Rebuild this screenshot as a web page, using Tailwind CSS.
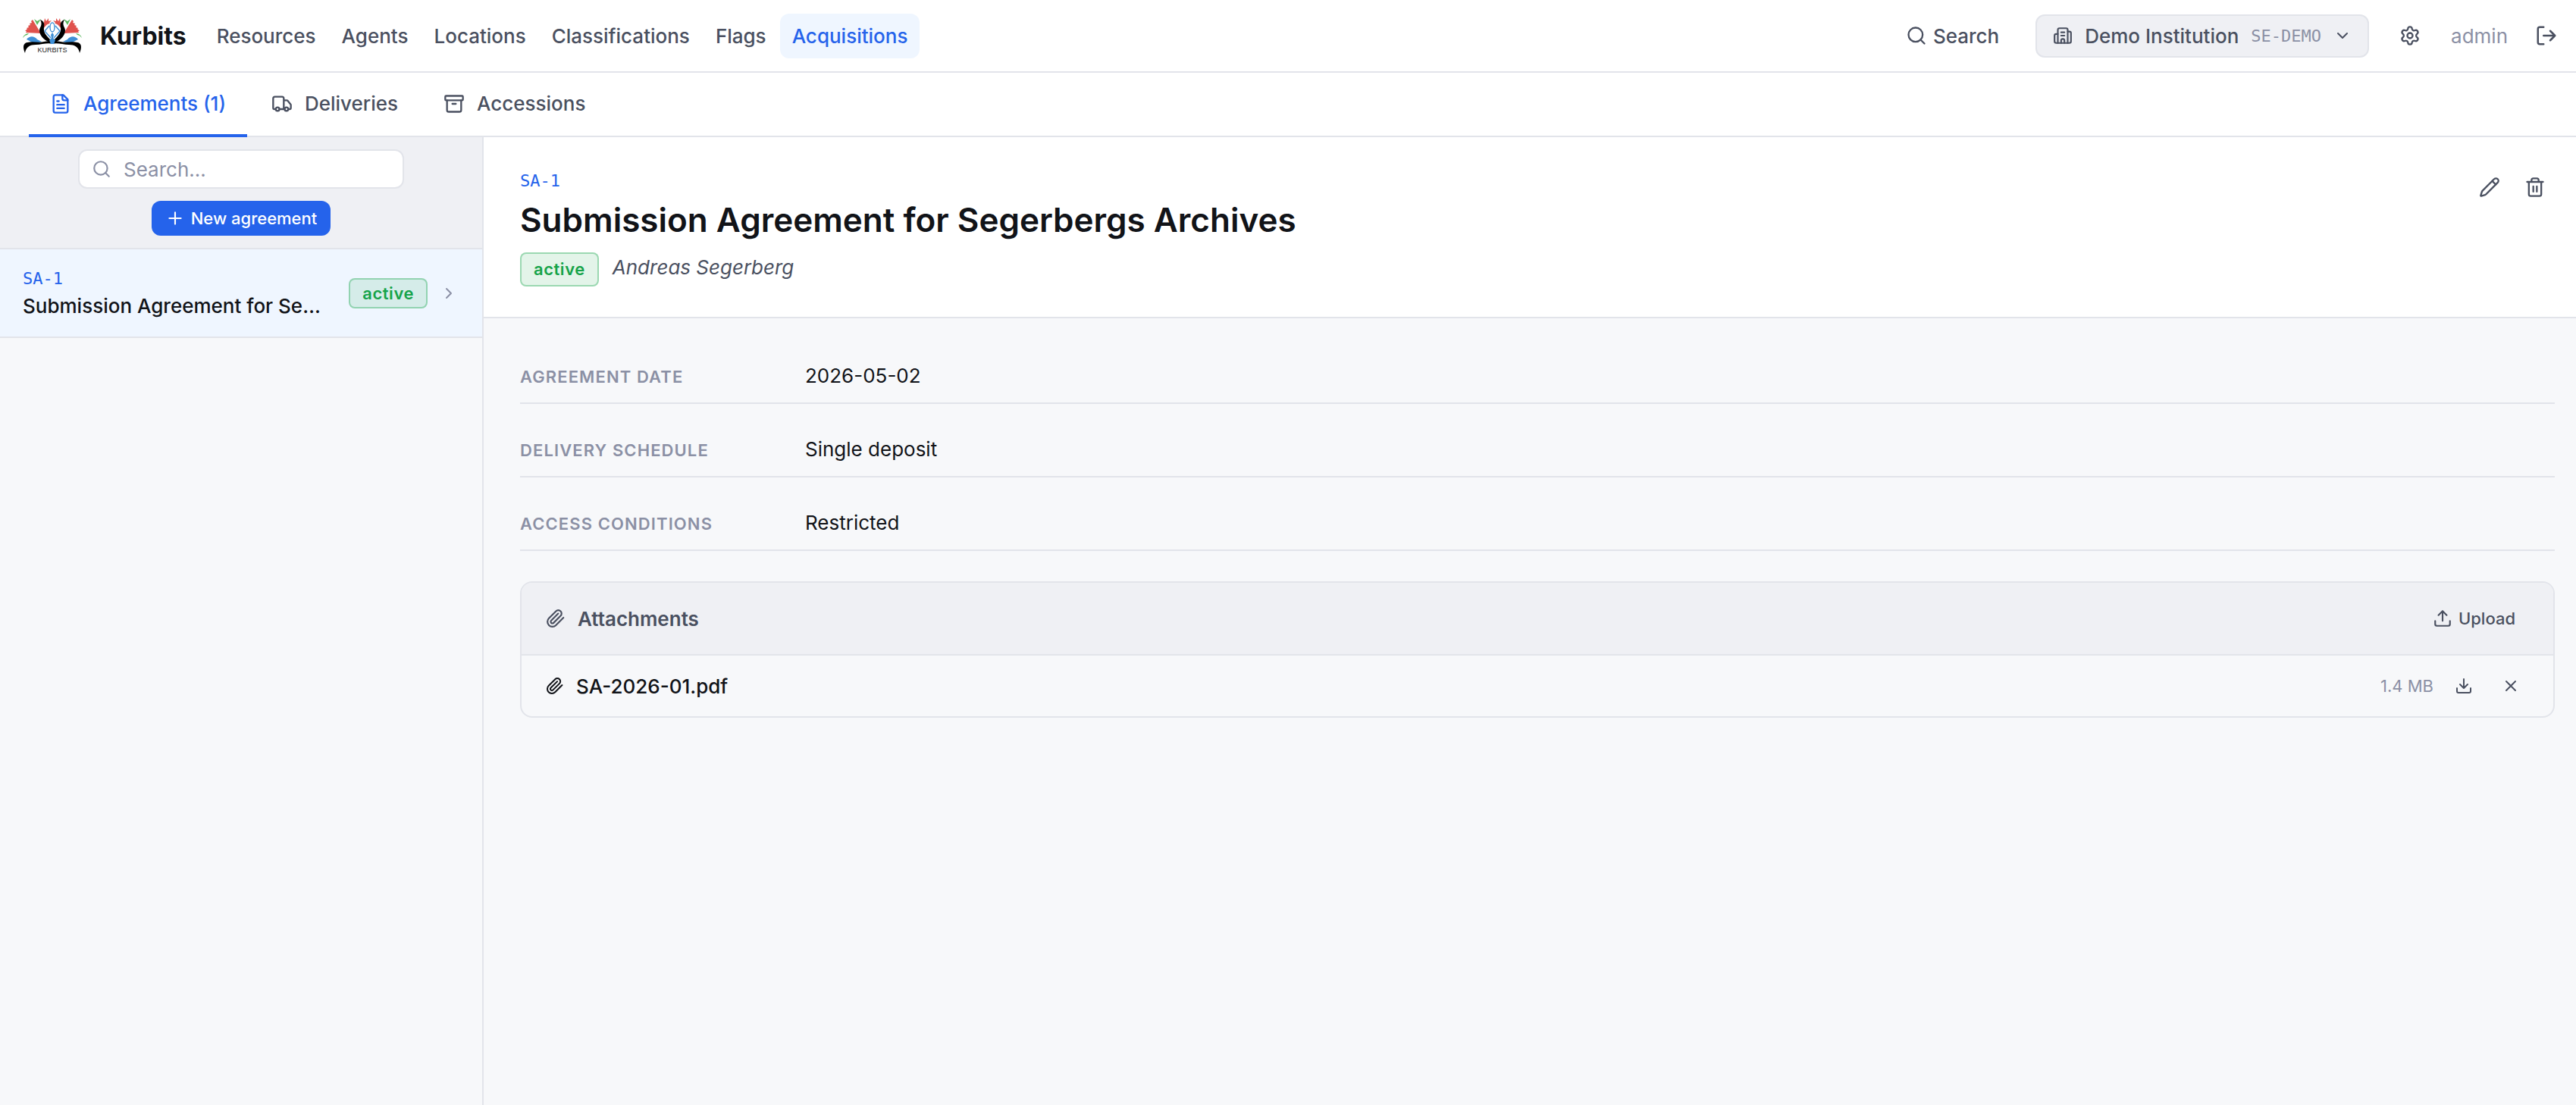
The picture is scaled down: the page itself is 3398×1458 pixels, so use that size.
<!DOCTYPE html>
<html lang="en">
<head>
  <meta charset="utf-8">
  <meta name="viewport" content="width=device-width, initial-scale=1">
  <title>Kurbits – Acquisitions</title>
  <script src="https://cdn.jsdelivr.net/npm/@tailwindcss/browser@4"></script>
</head>
<body class="min-h-screen flex flex-col bg-[#f7f8fa] text-[#111318] text-[26px] leading-[39px] font-[Inter,sans-serif]">

  <!-- icon sprite -->
  <svg class="hidden" aria-hidden="true">
    <symbol id="search" viewBox="0 0 24 24"><circle cx="11" cy="11" r="8"/><path d="m21 21-4.3-4.3"/></symbol>
    <symbol id="building" viewBox="0 0 24 24"><path d="M10 12h4M10 8h4M14 21v-3a2 2 0 0 0-4 0v3"/><path d="M6 10H4a2 2 0 0 0-2 2v7a2 2 0 0 0 2 2h16a2 2 0 0 0 2-2V9a2 2 0 0 0-2-2h-2"/><path d="M6 21V5a2 2 0 0 1 2-2h8a2 2 0 0 1 2 2v16"/></symbol>
    <symbol id="chevron-down" viewBox="0 0 24 24"><path d="m6 9 6 6 6-6"/></symbol>
    <symbol id="chevron-right" viewBox="0 0 24 24"><path d="m9 18 6-6-6-6"/></symbol>
    <symbol id="settings" viewBox="0 0 24 24"><path d="M9.671 4.136a2.34 2.34 0 0 1 4.659 0 2.34 2.34 0 0 0 3.319 1.915 2.34 2.34 0 0 1 2.33 4.033 2.34 2.34 0 0 0 0 3.831 2.34 2.34 0 0 1-2.33 4.033 2.34 2.34 0 0 0-3.319 1.915 2.34 2.34 0 0 1-4.659 0 2.34 2.34 0 0 0-3.32-1.915 2.34 2.34 0 0 1-2.33-4.033 2.34 2.34 0 0 0 0-3.831A2.34 2.34 0 0 1 6.35 6.051a2.34 2.34 0 0 0 3.319-1.915"/><circle cx="12" cy="12" r="3"/></symbol>
    <symbol id="log-out" viewBox="0 0 24 24"><path d="M9 21H5a2 2 0 0 1-2-2V5a2 2 0 0 1 2-2h4M16 17l5-5-5-5M21 12H9"/></symbol>
    <symbol id="file-text" viewBox="0 0 24 24"><path d="M15 2H6a2 2 0 0 0-2 2v16a2 2 0 0 0 2 2h12a2 2 0 0 0 2-2V7Z"/><path d="M14 2v4a2 2 0 0 0 2 2h4M10 9H8M16 13H8M16 17H8"/></symbol>
    <symbol id="truck" viewBox="0 0 24 24"><path d="M14 18V6a2 2 0 0 0-2-2H4a2 2 0 0 0-2 2v11a1 1 0 0 0 1 1h2M15 18H9M19 18h2a1 1 0 0 0 1-1v-3.65a1 1 0 0 0-.22-.624l-3.48-4.35A1 1 0 0 0 17.52 8H14"/><circle cx="17" cy="18" r="2"/><circle cx="7" cy="18" r="2"/></symbol>
    <symbol id="archive" viewBox="0 0 24 24"><rect x="2" y="3" width="20" height="5" rx="1"/><path d="M4 8v11a2 2 0 0 0 2 2h12a2 2 0 0 0 2-2V8M10 12h4"/></symbol>
    <symbol id="plus" viewBox="0 0 24 24"><path d="M5 12h14M12 5v14"/></symbol>
    <symbol id="pencil" viewBox="0 0 24 24"><path d="M21.174 6.812a1 1 0 0 0-3.986-3.987L3.842 16.174a2 2 0 0 0-.5.83l-1.321 4.352a.5.5 0 0 0 .623.622l4.353-1.32a2 2 0 0 0 .83-.497z"/><path d="m15 5 4 4"/></symbol>
    <symbol id="trash" viewBox="0 0 24 24"><path d="M3 6h18M19 6v14a2 2 0 0 1-2 2H7a2 2 0 0 1-2-2V6M8 6V4a2 2 0 0 1 2-2h4a2 2 0 0 1 2 2v2M10 11v6M14 11v6"/></symbol>
    <symbol id="paperclip" viewBox="0 0 24 24"><path d="m21.44 11.05-9.19 9.19a6 6 0 0 1-8.49-8.49l8.57-8.57A4 4 0 1 1 18 8.84l-8.59 8.57a2 2 0 0 1-2.83-2.83l8.49-8.48"/></symbol>
    <symbol id="upload" viewBox="0 0 24 24"><path d="M21 15v4a2 2 0 0 1-2 2H5a2 2 0 0 1-2-2v-4M17 8l-5-5-5 5M12 3v12"/></symbol>
    <symbol id="download" viewBox="0 0 24 24"><path d="M21 15v4a2 2 0 0 1-2 2H5a2 2 0 0 1-2-2v-4M7 10l5 5 5-5M12 15V3"/></symbol>
    <symbol id="x" viewBox="0 0 24 24"><path d="M18 6 6 18M6 6l12 12"/></symbol>
  </svg>

  <header class="flex items-center justify-between h-24 pl-[30px] pr-6 bg-white border-b-2 border-[#e2e4ea]">
    <div class="flex items-center">
      <a href="#" class="flex items-center gap-6 mr-6 text-[32px] font-bold">
        <svg class="w-[78px] h-12" viewBox="0 0 78 48" role="img" aria-label="Kurbits logo">
          <g id="petals">
            <path fill="#e0524d" d="M13 3 24 21 4 20 5 18 3 18 6 15 5 14 8 13 7 11 10 10 9 8 12 7 11 5z"/>
            <path fill="#e0524d" d="M28 14c-1-3-1-5 0-7l1-6 2 4 3-4v4l4-1-3 3 2 1c-4 0-6 2-9 6z"/>
            <path fill="#5cb860" d="m15 2 4 3 5-3-5 8zM0 27c1-3 4-6 8-6l-2 2-3 1z"/>
            <path fill="#3f8fd6" d="M5 29c4-5 10-5 14 0l6 3c-6 2-13 2-16-1z"/>
            <path fill="#000" d="M23 3c5 2 6 5 5 10-1 7 3 11 10 18l-2 2C28 30 22 24 22 17c0-4 5-7 1-14z"/>
            <path fill="#000" d="M39 35c-6-2-14 1-22 1C10 36 4 39 3 47 0 40 0 34 6 33c8-2 15 1 22-1 4-1 8-1 11 0z"/>
          </g>
          <use href="#petals" transform="matrix(-1 0 0 1 78 0)"/>
          <path fill="#fff" d="M39 4c5 5 8 9 10 14L39 29 29 18C31 13 34 9 39 4z"/>
          <g fill="none" stroke="#3f8fd6" stroke-width="1.4"><path d="m35 11-6 7 8 9M43 11l6 7-8 9"/><ellipse cx="39" cy="13" rx="3" ry="6"/></g>
          <path fill="#3f8fd6" d="m39 20 2 3-1 4 3 3-2 5h-4l-2-5 3-3-1-4z"/>
          <text x="39" y="46" text-anchor="middle" font-size="9" fill="#222" font-family="Liberation Sans" font-weight="400">KURBITS</text>
        </svg>
        Kurbits
      </a>
      <nav class="flex gap-[2px] font-medium text-[#4a5060]">
        <a href="#" class="px-4 py-[10px]">Resources</a>
        <a href="#" class="px-4 py-[10px]">Agents</a>
        <a href="#" class="px-4 py-[10px]">Locations</a>
        <a href="#" class="px-4 py-[10px]">Classifications</a>
        <a href="#" class="px-4 py-[10px]">Flags</a>
        <a href="#" class="px-4 py-[10px] rounded-xl bg-[#eff6ff] text-[#2563eb]" aria-current="page">Acquisitions</a>
      </nav>
    </div>
    <div class="flex items-center text-[#4a5060] font-medium">
      <button class="flex items-center gap-2 mr-12">
        <svg class="size-7 fill-none stroke-current stroke-2" stroke-linecap="round" stroke-linejoin="round"><use href="#search"/></svg>
        Search
      </button>
      <button class="flex items-center gap-4 h-[57px] px-[21px] mr-10 rounded-xl border-2 border-[#e2e4ea] bg-[#eff0f4]" aria-haspopup="listbox">
        <svg class="size-[26px] fill-none stroke-current stroke-2" stroke-linecap="round" stroke-linejoin="round"><use href="#building"/></svg>
        Demo Institution
        <span class="font-['DejaVu_Sans_Mono',monospace] text-[22px] font-normal text-[#8b90a5]">SE-DEMO</span>
        <svg class="size-6 fill-none stroke-current stroke-2" stroke-linecap="round" stroke-linejoin="round"><use href="#chevron-down"/></svg>
      </button>
      <button class="mr-10" aria-label="Settings">
        <svg class="size-7 fill-none stroke-current stroke-2" stroke-linecap="round" stroke-linejoin="round"><use href="#settings"/></svg>
      </button>
      <span class="mr-9 font-normal text-[#8b90a5]">admin</span>
      <button aria-label="Log out">
        <svg class="size-[30px] fill-none stroke-current stroke-2" stroke-linecap="round" stroke-linejoin="round"><use href="#log-out"/></svg>
      </button>
    </div>
  </header>

  <nav class="flex gap-1 h-[85px] px-[38px] bg-white border-b-2 border-[#e2e4ea] font-medium text-[#4a5060]">
    <a href="#" class="flex items-center gap-4 px-7 -mb-[2px] border-b-4 border-[#2563eb] text-[#2563eb]" aria-current="page">
      <svg class="size-7 fill-none stroke-current stroke-2" stroke-linecap="round" stroke-linejoin="round"><use href="#file-text"/></svg>
      Agreements (1)
    </a>
    <a href="#" class="flex items-center gap-4 px-7 -mb-[2px] border-b-4 border-transparent">
      <svg class="size-7 fill-none stroke-current stroke-2" stroke-linecap="round" stroke-linejoin="round"><use href="#truck"/></svg>
      Deliveries
    </a>
    <a href="#" class="flex items-center gap-4 px-7 -mb-[2px] border-b-4 border-transparent">
      <svg class="size-7 fill-none stroke-current stroke-2" stroke-linecap="round" stroke-linejoin="round"><use href="#archive"/></svg>
      Accessions
    </a>
  </nav>

  <div class="flex grow">
    <aside class="w-[638px] shrink-0 border-r-2 border-[#e2e4ea]">
      <div class="flex flex-col items-center gap-4 py-4 bg-[#eff0f4] border-b-2 border-[#e2e4ea]">
        <label class="flex items-center gap-4 w-[430px] h-[52px] px-4 rounded-xl border-2 border-[#e2e4ea] bg-white text-[#8b90a5]">
          <svg class="size-[26px] shrink-0 fill-none stroke-current stroke-2" stroke-linecap="round" stroke-linejoin="round"><use href="#search"/></svg>
          <input type="search" placeholder="Search…" aria-label="Search agreements" class="w-full outline-none placeholder:text-[#8b90a5]">
        </label>
        <button class="flex items-center gap-2 h-[46px] px-[18px] rounded-xl bg-[#2563eb] text-white text-[22px] font-medium">
          <svg class="size-[26px] fill-none stroke-current stroke-2" stroke-linecap="round" stroke-linejoin="round"><use href="#plus"/></svg>
          New agreement
        </button>
      </div>
      <a href="#" class="flex items-center gap-4 h-[117px] pl-[30px] pr-8 bg-[#eff6ff] border-b-2 border-[#e2e4ea]">
        <div class="grow min-w-0 mr-3">
          <div class="font-['DejaVu_Sans_Mono',monospace] text-[22px] leading-[33px] text-[#2563eb]">SA-1</div>
          <div class="truncate font-medium">Submission Agreement for Segerbergs Archives</div>
        </div>
        <span class="px-4 rounded-lg border-2 border-[#16a34a]/35 bg-[#16a34a]/12 text-[22px] leading-9 font-semibold tracking-wide text-[#16a34a]">active</span>
        <svg class="size-6 shrink-0 fill-none stroke-[#8b90a5] stroke-2" stroke-linecap="round" stroke-linejoin="round"><use href="#chevron-right"/></svg>
      </a>
    </aside>

    <main class="grow min-w-0">
      <div class="flex items-start justify-between h-[239px] pt-10 pl-12 pr-7 bg-white border-b-2 border-[#e2e4ea]">
        <div>
          <div class="font-['DejaVu_Sans_Mono',monospace] text-[22px] leading-[35px] text-[#2563eb]">SA-1</div>
          <h1 class="text-[44px] leading-[68px] font-semibold">Submission Agreement for Segerbergs Archives</h1>
          <div class="flex items-start gap-[18px] mt-[9px]">
            <span class="px-4 rounded-lg border-2 border-[#16a34a]/35 bg-[#16a34a]/12 text-[22px] leading-[41px] font-semibold tracking-wide text-[#16a34a]">active</span>
            <span class="italic text-[#4a5060]">Andreas Segerberg</span>
          </div>
        </div>
        <div class="flex gap-2 text-[#4a5060]">
          <button class="p-3" aria-label="Edit"><svg class="size-7 fill-none stroke-current stroke-2" stroke-linecap="round" stroke-linejoin="round"><use href="#pencil"/></svg></button>
          <button class="p-3" aria-label="Delete"><svg class="size-7 fill-none stroke-current stroke-2" stroke-linecap="round" stroke-linejoin="round"><use href="#trash"/></svg></button>
        </div>
      </div>

      <div class="pt-4 pl-12 pr-7">
        <dl>
          <div class="flex items-baseline pt-10 pb-4 border-b-2 border-[#e2e4ea]">
            <dt class="w-94 shrink-0 text-[22px] leading-[33px] font-semibold uppercase tracking-wider text-[#8b90a5]">Agreement date</dt>
            <dd>2026-05-02</dd>
          </div>
          <div class="flex items-baseline pt-10 pb-4 border-b-2 border-[#e2e4ea]">
            <dt class="w-94 shrink-0 text-[22px] leading-[33px] font-semibold uppercase tracking-wider text-[#8b90a5]">Delivery schedule</dt>
            <dd>Single deposit</dd>
          </div>
          <div class="flex items-baseline pt-10 pb-4 border-b-2 border-[#e2e4ea]">
            <dt class="w-94 shrink-0 text-[22px] leading-[33px] font-semibold uppercase tracking-wider text-[#8b90a5]">Access conditions</dt>
            <dd>Restricted</dd>
          </div>
        </dl>

        <section class="mt-10 rounded-2xl border-2 border-[#e2e4ea] overflow-hidden">
          <div class="flex items-center justify-between h-24 px-8 bg-[#eff0f4] border-b-2 border-[#e2e4ea] text-[#4a5060]">
            <h2 class="flex items-center gap-4 font-semibold">
              <svg class="size-[26px] fill-none stroke-current stroke-2" stroke-linecap="round" stroke-linejoin="round"><use href="#paperclip"/></svg>
              Attachments
            </h2>
            <button class="flex items-center gap-2 px-[18px] text-[22px] font-medium">
              <svg class="size-[26px] fill-none stroke-current stroke-2" stroke-linecap="round" stroke-linejoin="round"><use href="#upload"/></svg>
              Upload
            </button>
          </div>
          <div class="flex items-center h-20 px-8">
            <a href="#" class="flex items-center gap-4 grow font-medium">
              <svg class="size-6 fill-none stroke-current stroke-2" stroke-linecap="round" stroke-linejoin="round"><use href="#paperclip"/></svg>
              SA-2026-01.pdf
            </a>
            <span class="text-[22px] text-[#8b90a5]">1.4 MB</span>
            <button class="ml-4 p-3 text-[#4a5060]" aria-label="Download"><svg class="size-6 fill-none stroke-current stroke-2" stroke-linecap="round" stroke-linejoin="round"><use href="#download"/></svg></button>
            <button class="ml-[14px] p-3 text-[#4a5060]" aria-label="Remove"><svg class="size-6 fill-none stroke-current stroke-2" stroke-linecap="round" stroke-linejoin="round"><use href="#x"/></svg></button>
          </div>
        </section>
      </div>
    </main>
  </div>
</body>
</html>
